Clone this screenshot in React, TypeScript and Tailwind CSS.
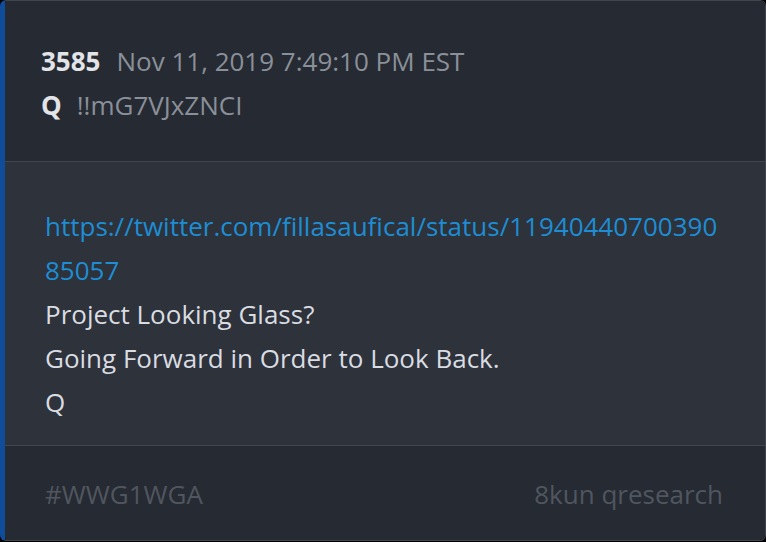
import React from "react";

export default function App() {
  return (
    <div className="w-[766px] h-[542px] bg-black" style={{ fontFamily: '"Open Sans", sans-serif' }}>
      <div className="w-[766px] h-[541px] flex flex-col rounded-[6px] border border-[#40454e] border-l-[5px] border-l-[#0f4c9a] overflow-hidden">
        <div className="bg-[#262a32] pl-[36px] pt-[38px] pb-[34px] border-b border-[#40454e]">
          <div className="flex items-center h-[44px] text-[26px]">
            <span className="font-bold text-[#e2e4e8]">3585</span>
            <span className="ml-[16px] text-[#8a9099]">Nov 11, 2019 7:49:10 PM EST</span>
          </div>
          <div className="flex items-center h-[44px] text-[26px]">
            <span className="font-bold text-[#e2e4e8]">Q</span>
            <span className="ml-[15px] text-[#8a9099]">!!mG7VJxZNCI</span>
          </div>
        </div>
        <div className="bg-[#2d323b] pl-[40px] pr-[40px] pt-[42px] pb-[21px] border-b border-[#40454e] text-[26px] leading-[44px] text-[#d9dce1]">
          <div className="text-[#1e8dd3] break-all">https://twitter.com/fillasaufical/status/1194044070039085057</div>
          <div>Project Looking Glass?</div>
          <div>Going Forward in Order to Look Back.</div>
          <div>Q</div>
        </div>
        <div className="flex-1 bg-[#262a32] flex items-center justify-between pl-[40px] pr-[42px] pt-[2px] text-[26px] text-[#50565f]">
          <span>#WWG1WGA</span>
          <span>8kun qresearch</span>
        </div>
      </div>
    </div>
  );
}
